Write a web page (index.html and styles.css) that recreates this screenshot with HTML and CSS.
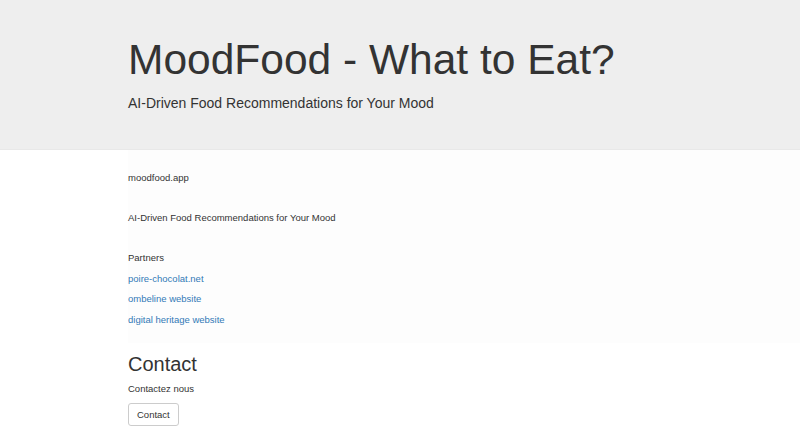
FILE: index.html
```html
<!DOCTYPE html>
<html lang="en">
<head>
<meta charset="utf-8">
<title>MoodFood - What to Eat?</title>
<link rel="stylesheet" href="styles.css">
</head>
<body>
<header class="jumbotron">
  <div class="container">
    <h1 class="title">MoodFood - What to Eat?</h1>
    <p class="lead">AI-Driven Food Recommendations for Your Mood</p>
  </div>
</header>
<main>
  <section class="about">
    <p class="line">moodfood.app</p>
    <p class="line tagline">AI-Driven Food Recommendations for Your Mood</p>
    <div class="partners">
      <p class="line">Partners</p>
      <ul class="links">
        <li><a href="#">poire-chocolat.net</a></li>
        <li><a href="#">ombeline website</a></li>
        <li><a href="#">digital heritage website</a></li>
      </ul>
    </div>
  </section>
  <section class="contact">
    <h2 class="contact-title">Contact</h2>
    <p class="line">Contactez nous</p>
    <button class="btn" type="button">Contact</button>
  </section>
</main>
</body>
</html>
```

FILE: styles.css
```css
* { box-sizing: border-box; }
html, body { margin: 0; padding: 0; }
body {
  background: #fff;
  color: #333;
  font-family: "Liberation Sans", Arial, Helvetica, sans-serif;
  font-size: 9.5px;
  line-height: 13.33px;
}
.jumbotron {
  background: #eee;
  height: 150px;
  padding: 37px 0 0 128px;
  border-bottom: 1px solid #e8e8e8;
}
.title {
  margin: 0;
  font-size: 42.5px;
  font-weight: normal;
  line-height: 46px;
  color: #333;
}
.lead {
  margin: 10px 0 0;
  font-size: 14px;
  line-height: 20px;
}
.about {
  margin-left: 128px;
  background: #fdfdfd;
  padding: 21px 0 17px;
  display: flex;
  flex-direction: column;
  gap: 26.7px;
}
.line { margin: 0; }
.partners { display: flex; flex-direction: column; gap: 7.5px; }
.links {
  list-style: none;
  margin: 0;
  padding: 0;
  display: flex;
  flex-direction: column;
  gap: 7px;
}
.links a { color: #337ab7; text-decoration: none; }
.contact {
  padding: 10px 0 0 128px;
  display: flex;
  flex-direction: column;
  align-items: flex-start;
}
.contact-title {
  margin: 0 0 7.5px;
  font-size: 20px;
  font-weight: normal;
  line-height: 22px;
}
.btn {
  margin-top: 7px;
  font-family: inherit;
  font-size: 9.5px;
  line-height: 13.33px;
  color: #333;
  background: #fff;
  border: 1px solid #ccc;
  border-radius: 3px;
  padding: 4px 8px;
}
```
